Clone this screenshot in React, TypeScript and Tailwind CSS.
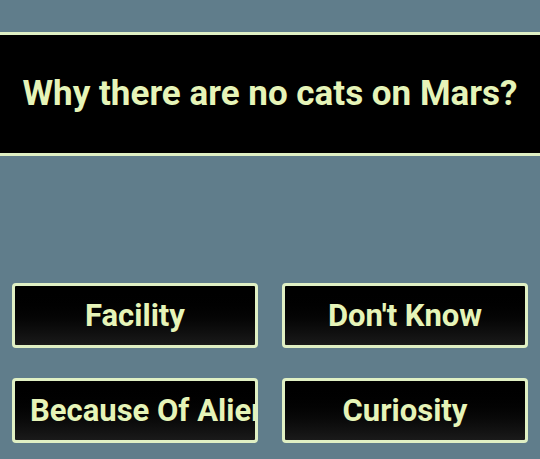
const answers = ['Facility', "Don't Know", 'Because Of Aliens', 'Curiosity']

export default function App() {
  return (
    <div
      className="w-[540px] h-[459px] bg-[#607d8b] overflow-hidden"
      style={{ fontFamily: 'Roboto, "Liberation Sans", sans-serif' }}
    >
      {/* Question */}
      <div className="mt-[32px] h-[124px] bg-black border-y-[3px] border-[#e0f0c4] flex items-center justify-center">
        <h1 className="text-[35px] font-bold text-[#e6f4b8] whitespace-nowrap">
          Why there are no cats on Mars?
        </h1>
      </div>

      {/* Answers */}
      <div className="mt-[127px] px-[12px] grid grid-cols-2 gap-x-[24px] gap-y-[30px]">
        {answers.map((a) => (
          <div
            key={a}
            className="h-[65px] rounded-[4px] border-[3px] border-[#e0f0c4] bg-gradient-to-b from-black to-[#1a1a1a] overflow-hidden pl-[15px] pr-[15px] text-center leading-[59px] whitespace-nowrap"
          >
            <span className="text-[31px] font-bold text-[#e6f4b8]">{a}</span>
          </div>
        ))}
      </div>
    </div>
  )
}
